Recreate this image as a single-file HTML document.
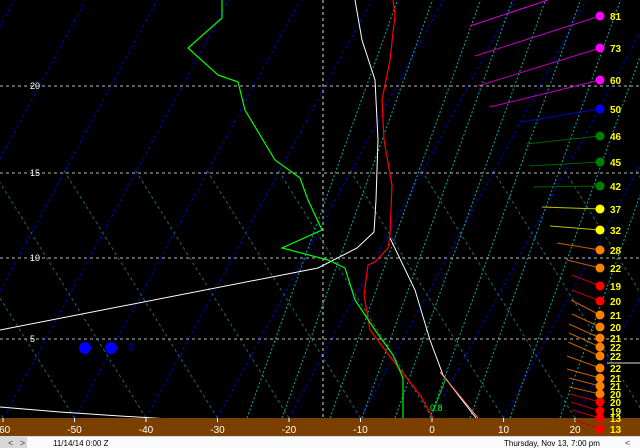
<!DOCTYPE html>
<html><head><meta charset="utf-8"><style>
html,body{margin:0;padding:0;background:#000;width:640px;height:448px;overflow:hidden;font-family:"Liberation Sans",sans-serif}
svg{display:block}
</style></head><body>
<svg id="s" width="640" height="448" xmlns="http://www.w3.org/2000/svg">
<rect width="640" height="448" fill="#000"/>
<g id="grid"></g>
<g fill="none" stroke-width="1.2">
<polyline stroke="#ffffff" stroke-width="1" points="355,0 362,40 375,80 378,140 376,200 374,232 357,248 318,268 0,330"/>
<polyline stroke="#ffffff" stroke-width="1" points="390,238 415,290 430,340 443,375 462,400 476,418"/>
<polyline stroke="#ffffff" stroke-width="1" points="0,407 60,412 120,416 170,419"/>
<polyline stroke="#ff8080" stroke-width="1" points="440,372 478,418"/>
<polyline stroke="#ff0000" points="393,0 395,15 390,60 382,100 384,140 392,185 390,235 388,248 375,262 368,265 364,295 370,330 385,350 402,372 420,395 433,418"/>
<polyline stroke="#00ff00" points="222,0 222,18 188,48 218,75 238,82 245,110 275,160 300,178 308,200 322,230 282,248 328,260 345,268 355,300 375,330 393,355 403,378 403,418"/>
<polyline stroke="#00c000" stroke-width="1" points="433,412 446,378"/>
</g>
<text x="430" y="411" fill="#00ff00" font-size="9">0.8</text>
<circle cx="85" cy="348" r="6" fill="#0000ff"/>
<circle cx="111" cy="348" r="6" fill="#0000ff"/>
<text x="128" y="350" fill="#0000ff" font-size="9">S</text>
<line x1="607" y1="363" x2="640" y2="363" stroke="#ddd"/>
<rect x="0" y="418" width="640" height="18" fill="#7b3f00"/>
<g id="axis" fill="#fff" font-size="10"></g>
<g id="barbs"></g>
<rect x="0" y="436" width="640" height="12" fill="#d8d8d8"/>
<rect x="27" y="437" width="613" height="11" fill="#fafafa"/>
<text x="8" y="446" font-size="9" fill="#444">&lt;</text>
<text x="20" y="446" font-size="9" fill="#444">&gt;</text>
<text x="53" y="446" font-size="8" fill="#000">11/14/14    0:00 Z</text>
<text x="504" y="446" font-size="8" fill="#000">Thursday,  Nov 13, 7:00 pm</text>
<text x="625" y="446" font-size="9" fill="#444">&lt;</text>
</svg>
<script>
var NS="http://www.w3.org/2000/svg";
function el(p,t,a){var e=document.createElementNS(NS,t);for(var k in a)e.setAttribute(k,a[k]);p.appendChild(e);return e;}
var g=document.getElementById('grid');
for(var T=-130;T<=20;T+=10){var xb=432+7.15*T;el(g,'line',{x1:xb,y1:418,x2:xb+418*0.54,y2:0,stroke:'#0000c8','stroke-dasharray':'3,3'});}
for(var k=0;k<14;k++){var xb=3+71.5*k;el(g,'line',{x1:xb,y1:418,x2:xb-0.62*250,y2:168,stroke:'#1e6a6a','stroke-dasharray':'3,3'});}
[247,282,330,362,395,430,470,510,560].forEach(function(xb){el(g,'line',{x1:xb,y1:418,x2:xb+418*0.36,y2:0,stroke:'#00b0b0','stroke-dasharray':'2,2'});});
[86,173,258,339].forEach(function(y){el(g,'line',{x1:0,y1:y,x2:640,y2:y,stroke:'#bbb','stroke-dasharray':'3,3'});});
el(g,'line',{x1:323,y1:0,x2:323,y2:448,stroke:'#ddd','stroke-dasharray':'3,3'});
[[20,86],[15,173],[10,258],[5,339]].forEach(function(a){var t=el(g,'text',{x:30,y:a[1]+3,fill:'#fff','font-size':'9'});t.textContent=a[0];});
var ax=document.getElementById('axis');
[-60,-50,-40,-30,-20,-10,0,10,20].forEach(function(T){var x=432+7.15*T;el(ax,'line',{x1:x,y1:418,x2:x,y2:422,stroke:'#fff'});var t=el(ax,'text',{x:x,y:433,'text-anchor':'middle'});t.textContent=T;});
var b=document.getElementById('barbs');
el(b,'line',{x1:470,y1:26,x2:548,y2:0,stroke:'#e000e0'});
var B=[[16,'#ff00ff','#c000c0',81,475,56],[48,'#ff00ff','#c000c0',73,478,86],[80,'#ff00ff','#c000c0',60,490,107],[109,'#0000ff','#0000c0',50,520,122],[136,'#008000','#006000',46,526,144],[162,'#008000','#006000',45,529,166],[186,'#008000','#006000',42,533,187],[209,'#ffff00','#c0c000',37,542,207],[230,'#ffff00','#c0c000',32,550,226],[250,'#ff8000','#c06000',28,557,243],[268,'#ff8000','#c06000',22,567,260],[286,'#ff0000','#c00000',19,572,275],[301,'#ff0000','#c00000',20,572,290],[315,'#ff8000','#c06000',21,571,300],[327,'#ff8000','#c06000',20,572,314],[338,'#ff8000','#c06000',21,569,324],[347,'#ff8000','#c06000',22,569,333],[356,'#ff8000','#c06000',22,568,342],[368,'#ff8000','#c06000',22,567,356],[378,'#ff8000','#c06000',21,567,369],[386,'#ff8000','#c06000',21,569,378],[394,'#ff8000','#c06000',20,569,387],[402,'#ff0000','#c00000',20,570,394],[411,'#ff0000','#c00000',19,571,402],[418,'#ff0000','#c00000',13,572,410],[429,'#ff0000','#c00000',13,575,420]];
B.forEach(function(a){el(b,'line',{x1:a[4],y1:a[5],x2:600,y2:a[0],stroke:a[2]});el(b,'circle',{cx:600,cy:a[0],r:4.5,fill:a[1]});var t=el(b,'text',{x:610,y:a[0]+4,fill:'#ffff00','font-size':'10','font-weight':'bold'});t.textContent=a[3];});
</script>
</body></html>
